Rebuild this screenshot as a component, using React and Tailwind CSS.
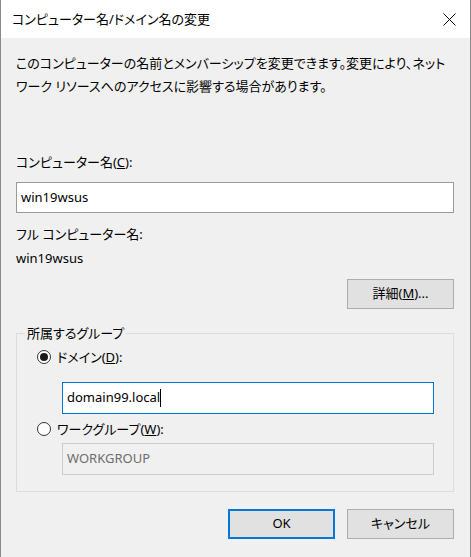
import React from 'react'

const font = "font-['Noto_Sans','Noto_Sans_CJK_JP',sans-serif] [font-feature-settings:'palt']"

const Radio = ({ checked }) => (
    <span className="w-[14px] h-[14px] rounded-full border border-[#333333] bg-white flex items-center justify-center shrink-0">
        {checked && <span className="w-[8px] h-[8px] rounded-full bg-[#1a1a1a]" />}
    </span>
)

const Button = ({ children, primary }) => (
    <button
        className={`w-[107px] h-[30px] bg-[#e1e1e1] text-[13px] text-black flex items-center justify-center ${primary ? 'border-2 border-[#0078d7]' : 'border border-[#adadad]'}`}
    >
        {children}
    </button>
)

const App = () => {
    return (
        <div className={`w-[471px] h-[557px] bg-[#f0f0f0] border-x border-[#8a8a8a] text-black ${font}`}>
            {/* title bar */}
            <div className="h-[38px] bg-white flex items-center justify-between pl-[11px] pr-[14px]">
                <span className="text-[13px] leading-[20px]">コンピューター名/ドメイン名の変更</span>
                <svg width="13" height="13" viewBox="0 0 13 13">
                    <path d="M0.5 0.5 L12.5 12.5 M12.5 0.5 L0.5 12.5" stroke="#000" strokeWidth="1" fill="none" />
                </svg>
            </div>

            <div className="pl-[15px] pr-[16px]">
                <p className="mt-[14px] text-[13px] leading-[23px] whitespace-nowrap">
                    このコンピューターの名前とメンバーシップを変更できます。変更により、ネット
                    <br />
                    ワーク リソースへのアクセスに影響する場合があります。
                </p>

                <div className="mt-[54px] text-[13px] leading-[20px]">
                    コンピューター名(<span className="underline">C</span>):
                </div>
                <div className="mt-[10px] h-[31px] bg-white border border-[#9a9a9a] flex items-center px-[4px] text-[13px]">
                    win19wsus
                </div>

                <div className="mt-[11px] text-[13px] leading-[20px]">フル コンピューター名:</div>
                <div className="mt-[4px] text-[13px] leading-[20px]">win19wsus</div>

                <div className="mt-[11px] flex justify-end">
                    <Button>
                        詳細(<span className="underline">M</span>)...
                    </Button>
                </div>

                <fieldset className="mt-[14px] border border-[#dcdcdc] pl-[8px] pr-[19px] pb-[16px]">
                    <legend className="px-[2px] text-[13px] leading-[20px]">所属するグループ</legend>
                    <div className="pt-[4px] pl-[12px]">
                        <label className="flex items-center gap-[6px] text-[13px] leading-[20px]">
                            <Radio checked />
                            <span>
                                ドメイン(<span className="underline">D</span>):
                            </span>
                        </label>
                        <div className="mt-[15px] ml-[25px] h-[32px] bg-white border border-[#0078d7] flex items-center px-[4px] text-[13px]">
                            domain99.local
                            <span className="inline-block w-px h-[18px] bg-black" />
                        </div>
                        <label className="mt-[5px] flex items-center gap-[6px] text-[13px] leading-[20px]">
                            <Radio />
                            <span>
                                ワークグループ(<span className="underline">W</span>):
                            </span>
                        </label>
                        <div className="mt-[4px] ml-[25px] h-[32px] bg-[#f0f0f0] border border-[#cccccc] flex items-center px-[4px] text-[13px] text-[#6d6d6d]">
                            WORKGROUP
                        </div>
                    </div>
                </fieldset>

                <div className="mt-[17px] flex justify-end gap-[12px]">
                    <Button primary>OK</Button>
                    <Button>キャンセル</Button>
                </div>
            </div>
        </div>
    )
}

export default App
